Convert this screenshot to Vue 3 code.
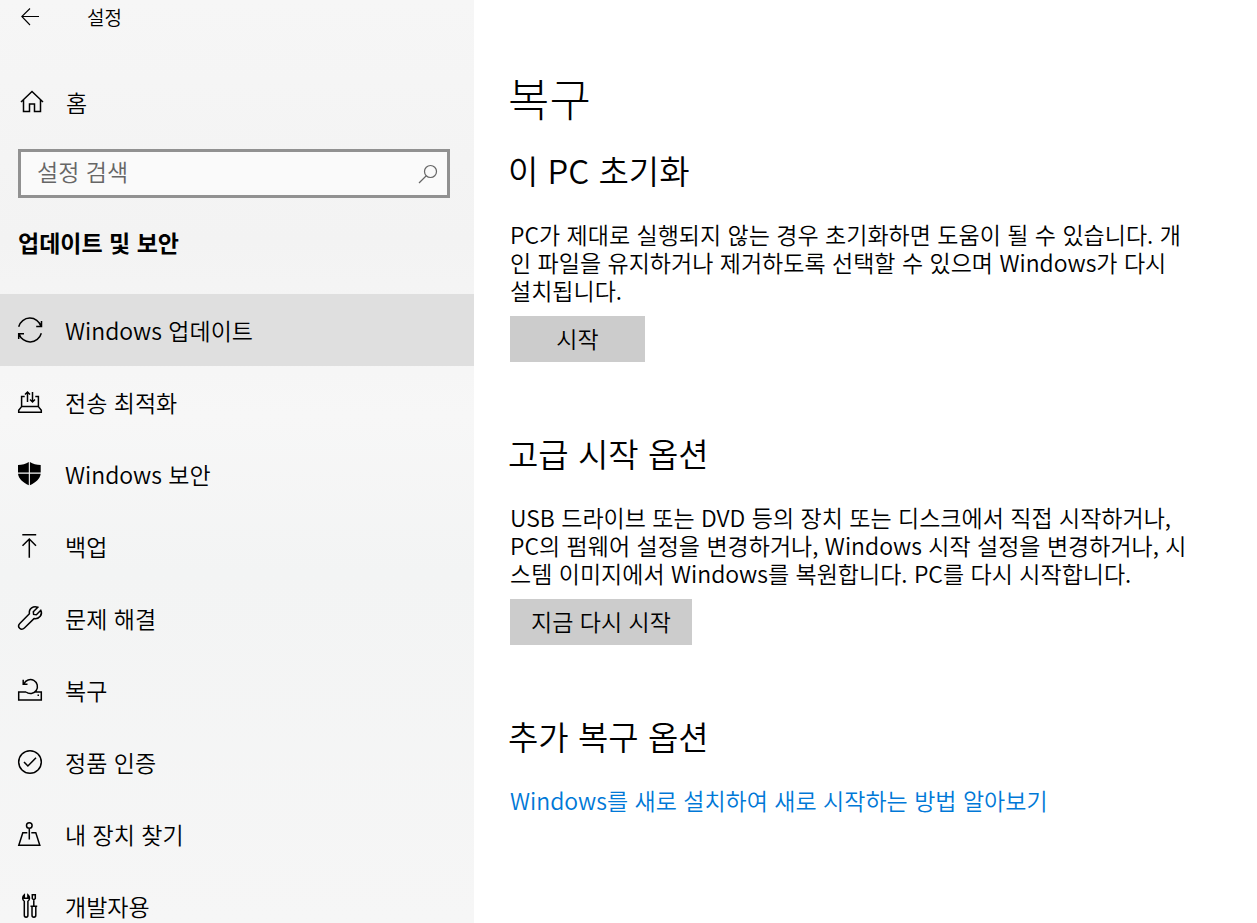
<template>
  <div class="settings" lang="ko">
    <aside class="sidebar">
      <header class="titlebar">
        <button class="back" type="button" aria-label="뒤로">
          <svg viewBox="0 0 20 20" width="20" height="20">
            <path d="M19 9.5H1.5M10 1.5L1.8 9.5L10 18" />
          </svg>
        </button>
        <span>설정</span>
      </header>

      <a class="home" href="#">
        <svg class="icon" viewBox="0 0 24 24">
          <path d="M1 12L12 1.5L23 12M3.5 10V21.5H9.5V14H14.5V21.5H20.5V10" />
        </svg>
        <span>홈</span>
      </a>

      <form class="search" role="search" @submit.prevent>
        <input v-model="query" type="text" placeholder="설정 검색" aria-label="설정 검색" />
        <button type="submit" aria-label="검색">
          <svg viewBox="0 0 20 20" width="20" height="20">
            <circle cx="12.5" cy="7.5" r="6" />
            <path d="M8.3 11.8L1 19" />
          </svg>
        </button>
      </form>

      <h2 class="group">업데이트 및 보안</h2>

      <nav class="menu">
        <a
          v-for="item in items"
          :key="item.label"
          class="menu-item"
          :class="{ 'is-active': item.label === active }"
          href="#"
          @click.prevent="active = item.label"
        >
          <svg class="icon" viewBox="0 0 24 24">
            <path v-if="item.fill" class="solid" :d="item.fill" />
            <path v-if="item.stroke" :d="item.stroke" />
          </svg>
          <span>{{ item.label }}</span>
        </a>
      </nav>
    </aside>

    <main class="content">
      <h1>복구</h1>

      <section>
        <h2>이 PC 초기화</h2>
        <p>
          PC가 제대로 실행되지 않는 경우 초기화하면 도움이 될 수 있습니다. 개<br />인 파일을 유지하거나
          제거하도록 선택할 수 있으며 Windows가 다시<br />설치됩니다.
        </p>
        <button class="action" type="button">시작</button>
      </section>

      <section>
        <h2>고급 시작 옵션</h2>
        <p>
          USB 드라이브 또는 DVD 등의 장치 또는 디스크에서 직접 시작하거나,<br />PC의 펌웨어 설정을
          변경하거나, Windows 시작 설정을 변경하거나, 시<br />스템 이미지에서 Windows를 복원합니다. PC를
          다시 시작합니다.
        </p>
        <button class="action" type="button">지금 다시 시작</button>
      </section>

      <section>
        <h2>추가 복구 옵션</h2>
        <a class="link" href="#">Windows를 새로 설치하여 새로 시작하는 방법 알아보기</a>
      </section>
    </main>
  </div>
</template>

<script setup>
import { ref } from 'vue'

const query = ref('')
const active = ref('Windows 업데이트')

const items = [
  {
    label: 'Windows 업데이트',
    stroke:
      'M.7 8.7A11.6 11.6 0 0 1 23 8.3M23.5 3V8.5H18.2M23.3 15.3A11.6 11.6 0 0 1 1 15.7M.7 21V15.7H6'
  },
  {
    label: '전송 최적화',
    stroke:
      'M6.7 6.5H3.6V16.6H20.4V6.5H17.3M3.6 16.6L.7 20.3V22.3H23.3V20.3L20.4 16.6M9.5 12V2M7 4.5L9.5 2L12 4.5M14.5 2V12M12 9.5L14.5 12L17 9.5'
  },
  {
    label: 'Windows 보안',
    fill: 'M10.8 0C8 1.8 4 3 0 3V10.6H10.8ZM11.9 0C14.7 1.8 18.7 3 22.7 3V10.6H11.9ZM0 11.7H10.8V23.3C5 20.5 .8 17 0 11.7ZM22.7 11.7H11.9V23.3C17.7 20.5 21.9 17 22.7 11.7Z'
  },
  {
    label: '백업',
    stroke: 'M4.3 .8H18.2M11.3 23.7V5M4.5 11.8L11.3 5L18 11.8'
  },
  {
    label: '문제 해결',
    stroke:
      'M19.8 1.3C15.4 -.6 10.6 2.6 11.4 7.8L1.8 17.4C-1.4 20.8 3 25.2 6.4 22L16 12.6C21.5 13.4 24.9 8.5 22.8 4.3L18.4 8.7L15.6 8.4L15.3 5.7Z'
  },
  {
    label: '복구',
    stroke: 'M8 14H.7V22H23.3V14H16.5M8 14A7 7 0 1 0 6 5.8M5.2 1.7V6.2H9.5',
    fill: 'M19.5 16.5H21V18H19.5Z'
  },
  {
    label: '정품 인증',
    stroke: 'M12 .7A11.3 11.3 0 1 1 12 23.3A11.3 11.3 0 1 1 12 .7M6 12L9.9 16L18 7.8'
  },
  {
    label: '내 장치 찾기',
    stroke:
      'M11.3 .7A2.8 2.8 0 1 1 11.3 6.3A2.8 2.8 0 1 1 11.3 .7M11.3 6.3V17.5M9.3 10.7H4.8L.8 23.2H21.8L17.8 10.7H13.3'
  },
  {
    label: '개발자용',
    stroke:
      'M6.3 .8C4 2.4 4.3 6 6.3 7.3V21.3C6.3 23.8 9.9 23.8 9.9 21.3V7.3C11.9 6 12.2 2.4 9.9 .8V4.3H6.3ZM14.3 .7H17.3V4.5L15.8 6L14.3 4.5ZM15.8 6V12.3M12.5 12.3H19.2M14 12.3V21.3C14 23.8 17.8 23.8 17.8 21.3V12.3'
  }
]
</script>

<style>
body {
  margin: 0;
}
</style>

<style scoped>
.settings {
  display: flex;
  height: 100vh;
  overflow: hidden;
  background: #fff;
  color: #000;
  font-family: "Noto Sans CJK KR", sans-serif;
  font-size: 23px;
  font-weight: 350;
  line-height: 28px;
}

h1,
h2,
p {
  margin: 0;
}

a {
  color: inherit;
  text-decoration: none;
}

button,
input {
  padding: 0;
  border: 0;
  border-radius: 0;
  background: none;
  color: inherit;
  font: inherit;
}

svg {
  flex: none;
  overflow: visible;
  fill: none;
  stroke: currentColor;
  stroke-width: 1.5;
}

.icon {
  width: 24px;
  height: 24px;
}

.solid {
  fill: currentColor;
  stroke: none;
}

/* Sidebar */
.sidebar {
  display: flex;
  flex: none;
  flex-direction: column;
  width: 474px;
  background: linear-gradient(180deg, #f6f6f6 0%, #f3f3f3 26%, #f7f7f7 45%, #f3f4f4 62%, #f6f6f6 100%);
}

.titlebar {
  display: flex;
  align-items: center;
  gap: 47px;
  height: 34px;
  padding-left: 20px;
  font-size: 19px;
}

.back {
  display: flex;
}

.back svg {
  stroke-width: 1.1;
}

.home {
  display: flex;
  align-items: center;
  gap: 22px;
  height: 72px;
  margin-top: 32px;
  padding-left: 20px;
}

.search {
  display: flex;
  align-items: center;
  margin: 11px 24px 0 18px;
  padding: 0 9px 0 16px;
  border: 3px solid #919191;
  background: #fafafa;
  color: #666;
}

.search input {
  flex: 1;
  box-sizing: border-box;
  min-width: 0;
  height: 43px;
  padding-bottom: 6px;
  outline: none;
}

.search input::placeholder {
  color: #666;
  opacity: 1;
}

.search button {
  display: flex;
}

.search svg {
  stroke-width: 1.2;
}

.group {
  margin: 20px 0 28px 18px;
  font-size: 23px;
  font-weight: 700;
  line-height: 48px;
}

.menu {
  flex: 1;
  min-height: 0;
  overflow: hidden;
}

.menu-item {
  display: flex;
  align-items: center;
  gap: 23px;
  height: 72px;
  padding-left: 18px;
}

.menu-item.is-active {
  background: #dfdfdf;
}

/* Content */
.content {
  flex: 1;
  min-width: 0;
  padding: 58px 36px 0;
}

.content h1,
.content h2 {
  margin-left: -2px;
  font-weight: 350;
}

.content h1 {
  margin-bottom: 8px;
  font-size: 45px;
  font-weight: 300;
  line-height: 80px;
}

.content h2 {
  margin-bottom: 26px;
  font-size: 33px;
  line-height: 48px;
}

.content section {
  margin-bottom: 67px;
}

.content p {
  margin-bottom: 12px;
  white-space: nowrap;
}

.action {
  display: block;
  min-width: 135px;
  height: 46px;
  padding: 0 21px 2px;
  background: #ccc;
}

.link {
  color: #0078d7;
}
</style>
